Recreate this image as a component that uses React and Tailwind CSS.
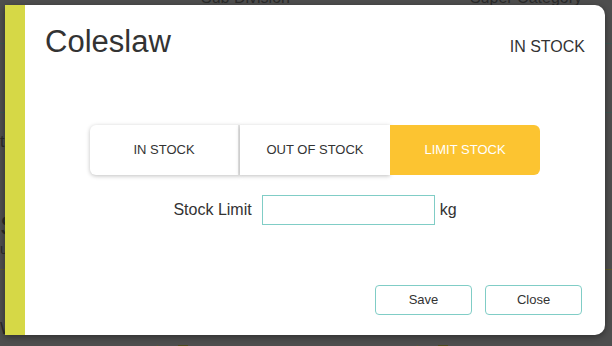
import React from "react";

const font = { fontFamily: '"Liberation Sans", Arial, sans-serif' };

function Backdrop() {
  // dimmed page that sits behind the modal overlay
  return (
    <div className="absolute inset-0 bg-[#4e4e4e] text-[#2a2a2a]">
      <div className="flex h-[5px] overflow-hidden">
        <span className="ml-[201px] -mt-[11px] text-[16px] leading-[18px]">Sub Division</span>
        <span className="ml-[180px] -mt-[11px] text-[16px] leading-[18px]">Super Category</span>
      </div>
      <div className="mt-[38px] h-px bg-[#3f5552]" />
      <div className="mt-[68px] h-px bg-[#3f5552]" />
      <div className="mt-[20px] text-[16px] leading-[18px]">t</div>
      <div className="mt-[60px] text-[28px] leading-[30px]">S</div>
      <div className="text-[14px] leading-[16px]">u</div>
      <div className="mt-[12px] h-px bg-[#5b5a2c]" />
      <div className="mt-[50px] text-[16px] leading-[18px]">W</div>
      <div className="mt-[7px] flex h-[10px] gap-[20px]">
        <div className="w-[158px] rounded-br-[4px] border-b border-r border-[#5b5a2c]" />
        <div className="flex w-[240px] rounded-b-[4px] border-b border-r border-[#5b5a2c]">
          <div className="w-[10px] bg-[#4a4a1e]" />
        </div>
        <div className="flex flex-1 border-b border-[#5b5a2c]">
          <div className="w-[10px] bg-[#4a4a1e]" />
        </div>
      </div>
    </div>
  );
}

function Segment({ label, active, first }) {
  if (active) {
    return (
      <div className="flex h-[50px] w-[150px] items-center justify-center rounded-r-[6px] bg-[#fcc431] text-[13px] text-white">
        {label}
      </div>
    );
  }
  return (
    <div
      className={`flex h-[50px] w-[150px] items-center justify-center bg-white text-[13px] text-[#333] shadow-[0_1px_4px_rgba(0,0,0,0.25)] ${
        first ? "rounded-l-[6px] border-r-2 border-[#e6e6e6]" : ""
      }`}
    >
      {label}
    </div>
  );
}

export default function App() {
  return (
    <div className="relative h-[346px] w-[612px] overflow-hidden" style={font}>
      <Backdrop />
      <div className="absolute left-[5px] top-[5px] flex h-[330px] w-[600px] overflow-hidden rounded-r-[10px] bg-white shadow-[0_2px_6px_rgba(0,0,0,0.4)]">
        <div className="w-[20px] bg-[#d6d846]" />
        <div className="flex flex-1 flex-col pl-[20px] pr-[20px] pt-[20px] pb-[20px]">
          <div className="flex items-baseline justify-between">
            <h1 className="text-[31px] leading-[34px] text-[#333]">Coleslaw</h1>
            <span className="text-[16px] text-[#333]">IN STOCK</span>
          </div>
          <div className="mt-[66px] flex justify-center">
            <div className="flex">
              <Segment label="IN STOCK" first />
              <Segment label="OUT OF STOCK" />
              <Segment label="LIMIT STOCK" active />
            </div>
          </div>
          <div className="mt-[20px] flex items-center justify-center text-[16px] text-[#333]">
            <span>Stock Limit</span>
            <input
              type="text"
              className="ml-[10px] h-[30px] w-[173px] border border-[#80cdc6] bg-white outline-none"
            />
            <span className="ml-[5px]">kg</span>
          </div>
          <div className="mt-auto flex justify-end gap-[13px] pr-[3px]">
            <button className="h-[30px] w-[97px] rounded-[4px] border border-[#80cdc6] bg-white text-[13px] text-[#333]">
              Save
            </button>
            <button className="h-[30px] w-[97px] rounded-[4px] border border-[#80cdc6] bg-white text-[13px] text-[#333]">
              Close
            </button>
          </div>
        </div>
      </div>
    </div>
  );
}
